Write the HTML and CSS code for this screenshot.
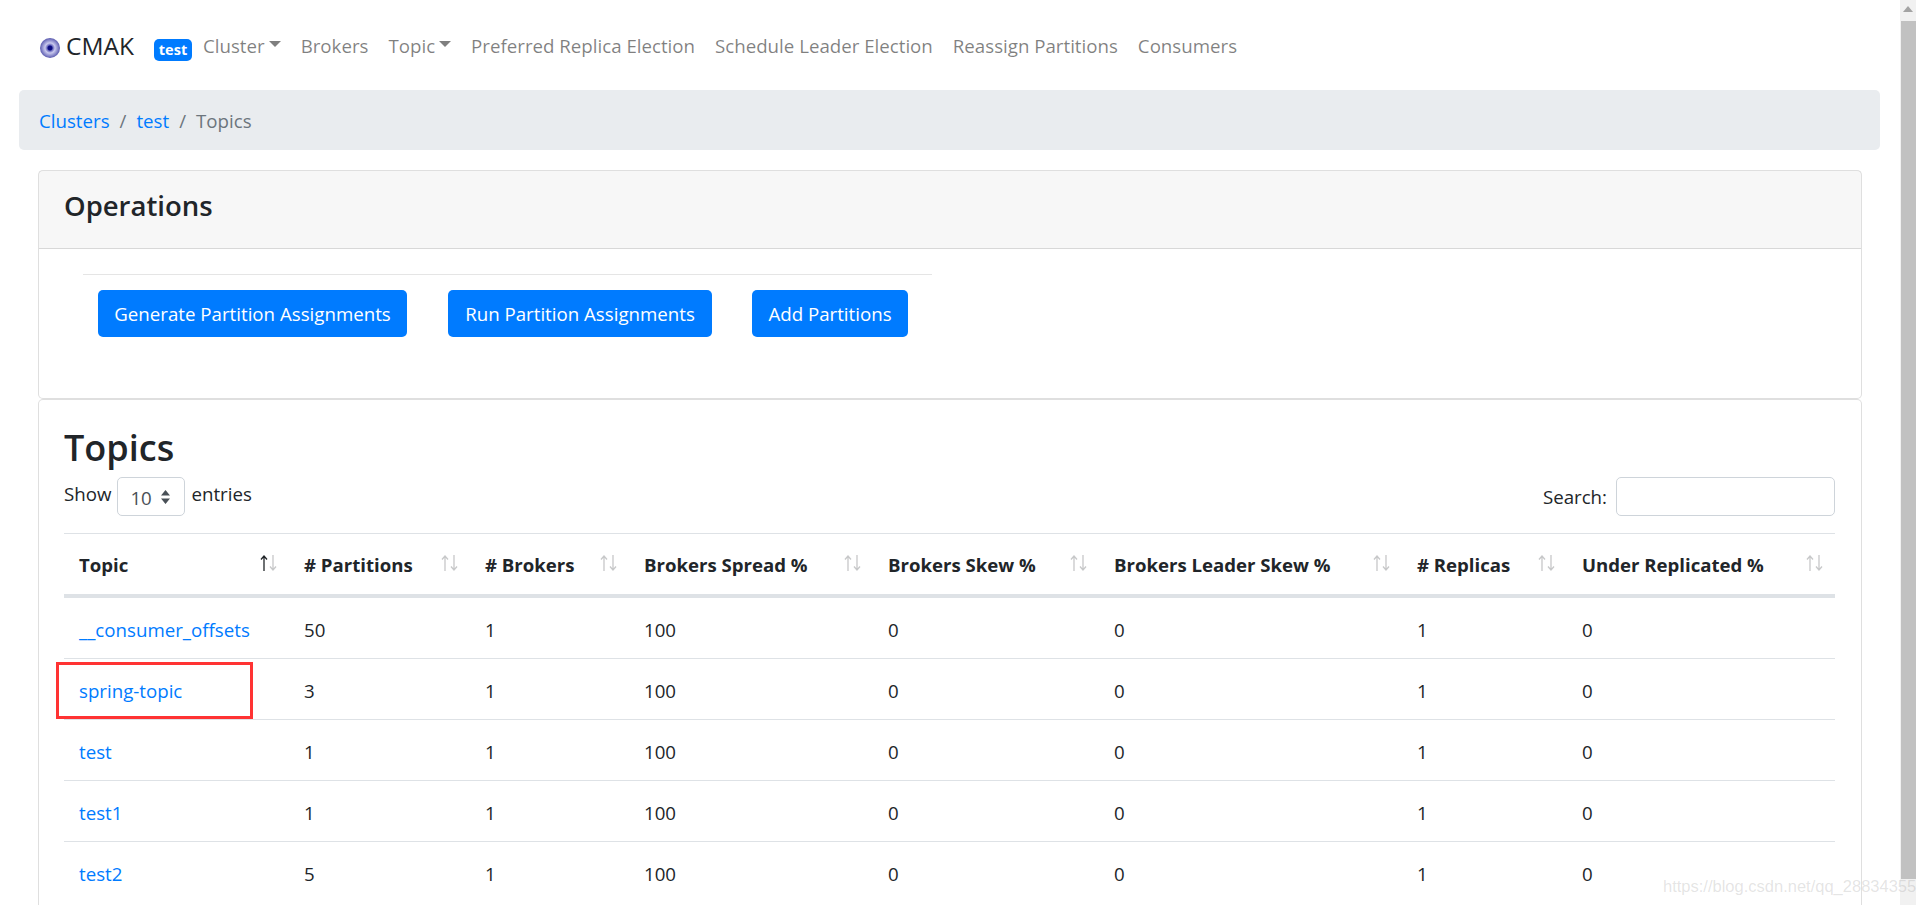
FILE: index.html
```html
<!DOCTYPE html>
<html lang="en">
<head>
<meta charset="utf-8">
<title>CMAK</title>
<link rel="stylesheet" href="styles.css">
</head>
<body>
<div class="shell">
<main class="page">
  <nav class="navbar">
    <a class="brand"><span class="logo"></span>CMAK</a>
    <span class="badge">test</span>
    <a class="nav-link">Cluster<span class="caret"></span></a>
    <a class="nav-link">Brokers</a>
    <a class="nav-link">Topic<span class="caret"></span></a>
    <a class="nav-link">Preferred Replica Election</a>
    <a class="nav-link">Schedule Leader Election</a>
    <a class="nav-link">Reassign Partitions</a>
    <a class="nav-link">Consumers</a>
  </nav>
  <ol class="breadcrumb">
    <li><a>Clusters</a></li>
    <li class="sep">/</li>
    <li><a>test</a></li>
    <li class="sep">/</li>
    <li class="current">Topics</li>
  </ol>
  <div class="content">
    <section class="card ops">
      <header class="card-header"><h4>Operations</h4></header>
      <div class="ops-body">
        <div class="ops-buttons">
          <button class="btn btn-a">Generate Partition Assignments</button>
          <button class="btn btn-b">Run Partition Assignments</button>
          <button class="btn btn-c">Add Partitions</button>
        </div>
      </div>
    </section>
    <section class="card topics">
      <h2>Topics</h2>
      <div class="controls">
        <label class="length">Show <span class="select">10<svg class="updown" width="11" height="16" viewBox="0 0 11 16"><path d="M5.5 1 10 6.5H1zM5.5 15 1 9.5h9z"/></svg></span> entries</label>
        <label class="search">Search: <input class="search-input" type="text"></label>
      </div>
      <table class="table">
        <colgroup><col class="c1"><col class="c2"><col class="c3"><col class="c4"><col class="c5"><col class="c6"><col class="c7"><col class="c8"></colgroup>
        <thead>
          <tr>
            <th>Topic<svg class="sort active" viewBox="0 0 17 16"><path class="up" d="M4 16V1M1 4.500 4 1l3 3.500"/><path class="down" d="M13 0v15M10 11.500l3 3.500 3-3.500"/></svg></th>
            <th># Partitions<svg class="sort" viewBox="0 0 17 16"><path class="up" d="M4 16V1M1 4.500 4 1l3 3.500"/><path class="down" d="M13 0v15M10 11.500l3 3.500 3-3.500"/></svg></th>
            <th># Brokers<svg class="sort" viewBox="0 0 17 16"><path class="up" d="M4 16V1M1 4.500 4 1l3 3.500"/><path class="down" d="M13 0v15M10 11.500l3 3.500 3-3.500"/></svg></th>
            <th>Brokers Spread %<svg class="sort" viewBox="0 0 17 16"><path class="up" d="M4 16V1M1 4.500 4 1l3 3.500"/><path class="down" d="M13 0v15M10 11.500l3 3.500 3-3.500"/></svg></th>
            <th>Brokers Skew %<svg class="sort" viewBox="0 0 17 16"><path class="up" d="M4 16V1M1 4.500 4 1l3 3.500"/><path class="down" d="M13 0v15M10 11.500l3 3.500 3-3.500"/></svg></th>
            <th>Brokers Leader Skew %<svg class="sort" viewBox="0 0 17 16"><path class="up" d="M4 16V1M1 4.500 4 1l3 3.500"/><path class="down" d="M13 0v15M10 11.500l3 3.500 3-3.500"/></svg></th>
            <th># Replicas<svg class="sort" viewBox="0 0 17 16"><path class="up" d="M4 16V1M1 4.500 4 1l3 3.500"/><path class="down" d="M13 0v15M10 11.500l3 3.500 3-3.500"/></svg></th>
            <th>Under Replicated %<svg class="sort" viewBox="0 0 17 16"><path class="up" d="M4 16V1M1 4.500 4 1l3 3.500"/><path class="down" d="M13 0v15M10 11.500l3 3.500 3-3.500"/></svg></th>
          </tr>
        </thead>
        <tbody>
          <tr><td><a>__consumer_offsets</a></td><td>50</td><td>1</td><td>100</td><td>0</td><td>0</td><td>1</td><td>0</td></tr>
          <tr><td class="marked"><a>spring-topic</a><span class="red-box"></span></td><td>3</td><td>1</td><td>100</td><td>0</td><td>0</td><td>1</td><td>0</td></tr>
          <tr><td><a>test</a></td><td>1</td><td>1</td><td>100</td><td>0</td><td>0</td><td>1</td><td>0</td></tr>
          <tr><td><a>test1</a></td><td>1</td><td>1</td><td>100</td><td>0</td><td>0</td><td>1</td><td>0</td></tr>
          <tr><td><a>test2</a></td><td>5</td><td>1</td><td>100</td><td>0</td><td>0</td><td>1</td><td>0</td></tr>
        </tbody>
      </table>
    </section>
  </div>
</main>
<aside class="scrollbar">
  <div class="scroll-up"><svg width="10" height="6" viewBox="0 0 10 6"><path d="M5 0l5 6H0z"/></svg></div>
  <div class="scroll-thumb"></div>
</aside>
</div>
<div class="watermark">https://blog.csdn.net/qq_28834355</div>
</body>
</html>
```
FILE: styles.css
```css
* { box-sizing: border-box; }
html, body { margin: 0; height: 905px; overflow: hidden; background: #fff; }
body { font-family: "Open Sans", "Noto Sans", sans-serif; font-size: 18.7px; color: #212529; }
.shell { display: flex; height: 905px; overflow: hidden; }
.page { flex: 1 1 auto; min-width: 0; }
a { color: #007bff; text-decoration: none; }

.navbar { height: 90px; display: flex; align-items: center; padding: 0 0 0 40px; }
.brand { display: flex; align-items: center; color: #212529; font-size: 24.5px; width: 114px; }
.logo { width: 20px; height: 20px; margin: 6px 6px 0 0; border-radius: 50%; background: radial-gradient(circle, #0b0b80 0 2px, #6b6bc0 3px, #c9c9ec 5px, #9d9dd6 7px, #5a5aae 10px); flex: none; }
.badge { width: 38px; height: 22px; margin-top: 10px; border-radius: 5px; background: #007bff; color: #fff; font-size: 14.5px; font-weight: 700; line-height: 22px; text-align: center; }
.nav-link { padding: 0 10px; color: rgba(0,0,0,.5); display: flex; align-items: center; }
.badge + .nav-link { margin-left: 1px; }
.caret { width: 0; height: 0; margin-left: 4px; border: 6px solid transparent; border-top-color: rgba(0,0,0,.5); border-bottom: 0; margin-top: -2px; }

.breadcrumb { list-style: none; display: flex; align-items: center; height: 60px; margin: 0 20px 20px 19px; padding: 0 20px; background: #e9ecef; border-radius: 5px; }
.sep { padding: 0 10px; color: #6c757d; }
.current { color: #6c757d; }

.content { margin: 0 38px 0 38px; }
.card { border: 1px solid rgba(0,0,0,.125); border-radius: 5px; background: #fff; }
.ops { height: 229px; }
.card-header { height: 78px; display: flex; align-items: center; padding: 0 25px 9px; background: rgba(0,0,0,.03); border-bottom: 1px solid rgba(0,0,0,.125); }
h4 { margin: 0; font-size: 27.5px; font-weight: 600; }
.ops-body { padding: 25px 0 0 44px; }
.ops-buttons { width: 849px; border-top: 1px solid rgba(0,0,0,.1); padding: 15px 0 0 15px; display: flex; }
.btn { height: 47px; padding: 0; border: 0; border-radius: 5px; background: #007bff; color: #fff; font: inherit; }
.btn-a { width: 309px; margin-right: 41px; }
.btn-b { width: 264px; margin-right: 40px; }
.btn-c { width: 156px; }

.topics { height: 600px; padding: 25px 26px 0 25px; }
h2 { margin: 0; font-size: 36px; font-weight: 600; line-height: 45px; }
.controls { display: flex; justify-content: space-between; height: 63px; padding-top: 7px; }
.length { display: flex; align-items: flex-start; gap: 6px; line-height: 34px; }
.select { width: 68px; height: 39px; border: 1px solid #ced4da; border-radius: 5px; display: flex; align-items: center; justify-content: space-between; padding: 3px 13px 0 12px; color: #495057; }
.updown { fill: #495057; margin-top: -3px; }
.search { display: flex; align-items: center; gap: 9px; height: 39px; }
.search-input { width: 219px; height: 39px; border: 1px solid #ced4da; border-radius: 5px; background: #fff; }

.table { width: 1771px; border-collapse: collapse; table-layout: fixed; }
.c1 { width: 225px; } .c2 { width: 181px; } .c3 { width: 159px; } .c4 { width: 244px; }
.c5 { width: 226px; } .c6 { width: 303px; } .c7 { width: 165px; } .c8 { width: 268px; }
th, td { padding: 0 15px; text-align: left; white-space: nowrap; }
th { position: relative; height: 62px; padding-top: 2px; border-top: 1px solid #dee2e6; border-bottom: 4px solid #dee2e6; font-weight: 700; font-size: 18.6px; }
td { height: 61px; border-top: 1px solid #dee2e6; padding-top: 3px; }
tbody tr:first-child td { border-top: 0; height: 63px; padding-top: 4px; }
.sort { position: absolute; right: 12px; top: 21px; width: 17px; height: 16px; fill: none; stroke: #212529; stroke-width: 1.300; }
.sort .up, .sort .down { opacity: .25; }
.sort.active .up { opacity: 1; }
.marked { position: relative; }
.red-box { position: absolute; left: -8px; top: 3px; width: 197px; height: 57px; border: 3px solid #ff3333; }

.scrollbar { flex: 0 0 16px; background: #f1f1f1; }
.scroll-up { height: 21px; display: flex; align-items: center; justify-content: center; }
.scroll-up svg { fill: #a3a3a3; margin-top: -3px; }
.scroll-thumb { height: 858px; margin-left: 1px; background: #c1c1c1; }

.watermark { position: absolute; left: 1663px; top: 877px; font-family: "Liberation Sans", sans-serif; font-size: 16.500px; color: rgba(120,120,120,.2); white-space: nowrap; }
```
